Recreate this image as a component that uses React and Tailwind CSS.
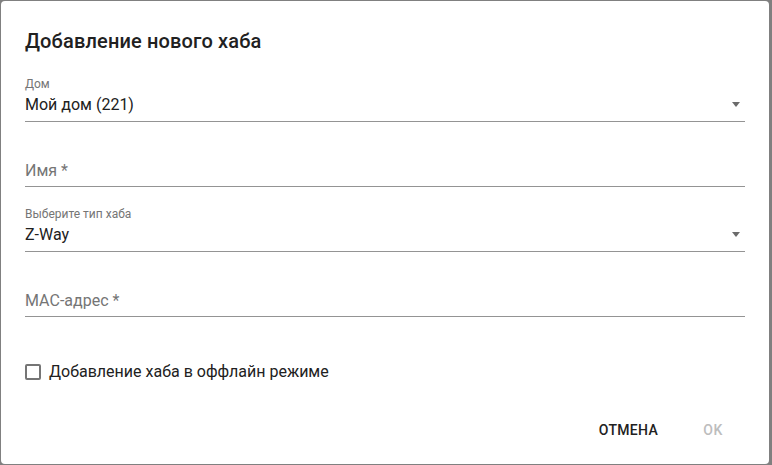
import React from "react";

const font = { fontFamily: "Roboto, 'Noto Sans', sans-serif" };

function SelectField({ label, value }) {
  return (
    <div className="flex h-[65px] flex-col justify-end">
      <div className="text-xs leading-[14px] text-[#757575]">{label}</div>
      <div className="mt-1 flex items-center justify-between border-b border-[#949494] pb-[7px]">
        <span className="text-base leading-[19px] text-[#212121]">{value}</span>
        <svg width="8" height="5" viewBox="0 0 8 5" className="mr-[5px]">
          <polygon points="0,0 8,0 4,5" fill="#6b6b6b" />
        </svg>
      </div>
    </div>
  );
}

function TextField({ placeholder }) {
  return (
    <div className="flex h-[65px] flex-col justify-end">
      <div className="border-b border-[#949494] pb-[6px] text-base leading-[19px] text-[#757575]">
        {placeholder}
      </div>
    </div>
  );
}

export default function App() {
  return (
    <div className="h-[465px] w-[772px] bg-[#808080] pl-px pt-px" style={font}>
      <div className="flex h-[463px] w-[768px] flex-col rounded bg-white px-6">
        <h2 className="pt-6 text-xl font-medium leading-8 tracking-[0.15px] text-[#212121]">
          Добавление нового хаба
        </h2>

        <SelectField label="Дом" value="Мой дом (221)" />
        <TextField placeholder="Имя *" />
        <SelectField label="Выберите тип хаба" value="Z-Way" />
        <TextField placeholder="MAC-адрес *" />

        <label className="mt-[43px] flex h-6 items-center gap-[8px]">
          <span className="h-[16px] w-[16px] rounded-[2px] border-2 border-[#757575]" />
          <span className="text-base leading-6 text-[#212121]">Добавление хаба в оффлайн режиме</span>
        </label>

        <div className="mt-[28px] flex justify-end gap-[15px]">
          <button
            type="button"
            className="h-9 px-2 text-sm font-medium uppercase tracking-[0.3px] text-[#212121]"
          >
            Отмена
          </button>
          <button
            type="button"
            disabled
            className="h-9 w-16 text-center text-sm font-medium uppercase tracking-[0.4px] text-[#bdbdbd]"
          >
            OK
          </button>
        </div>
      </div>
    </div>
  );
}
